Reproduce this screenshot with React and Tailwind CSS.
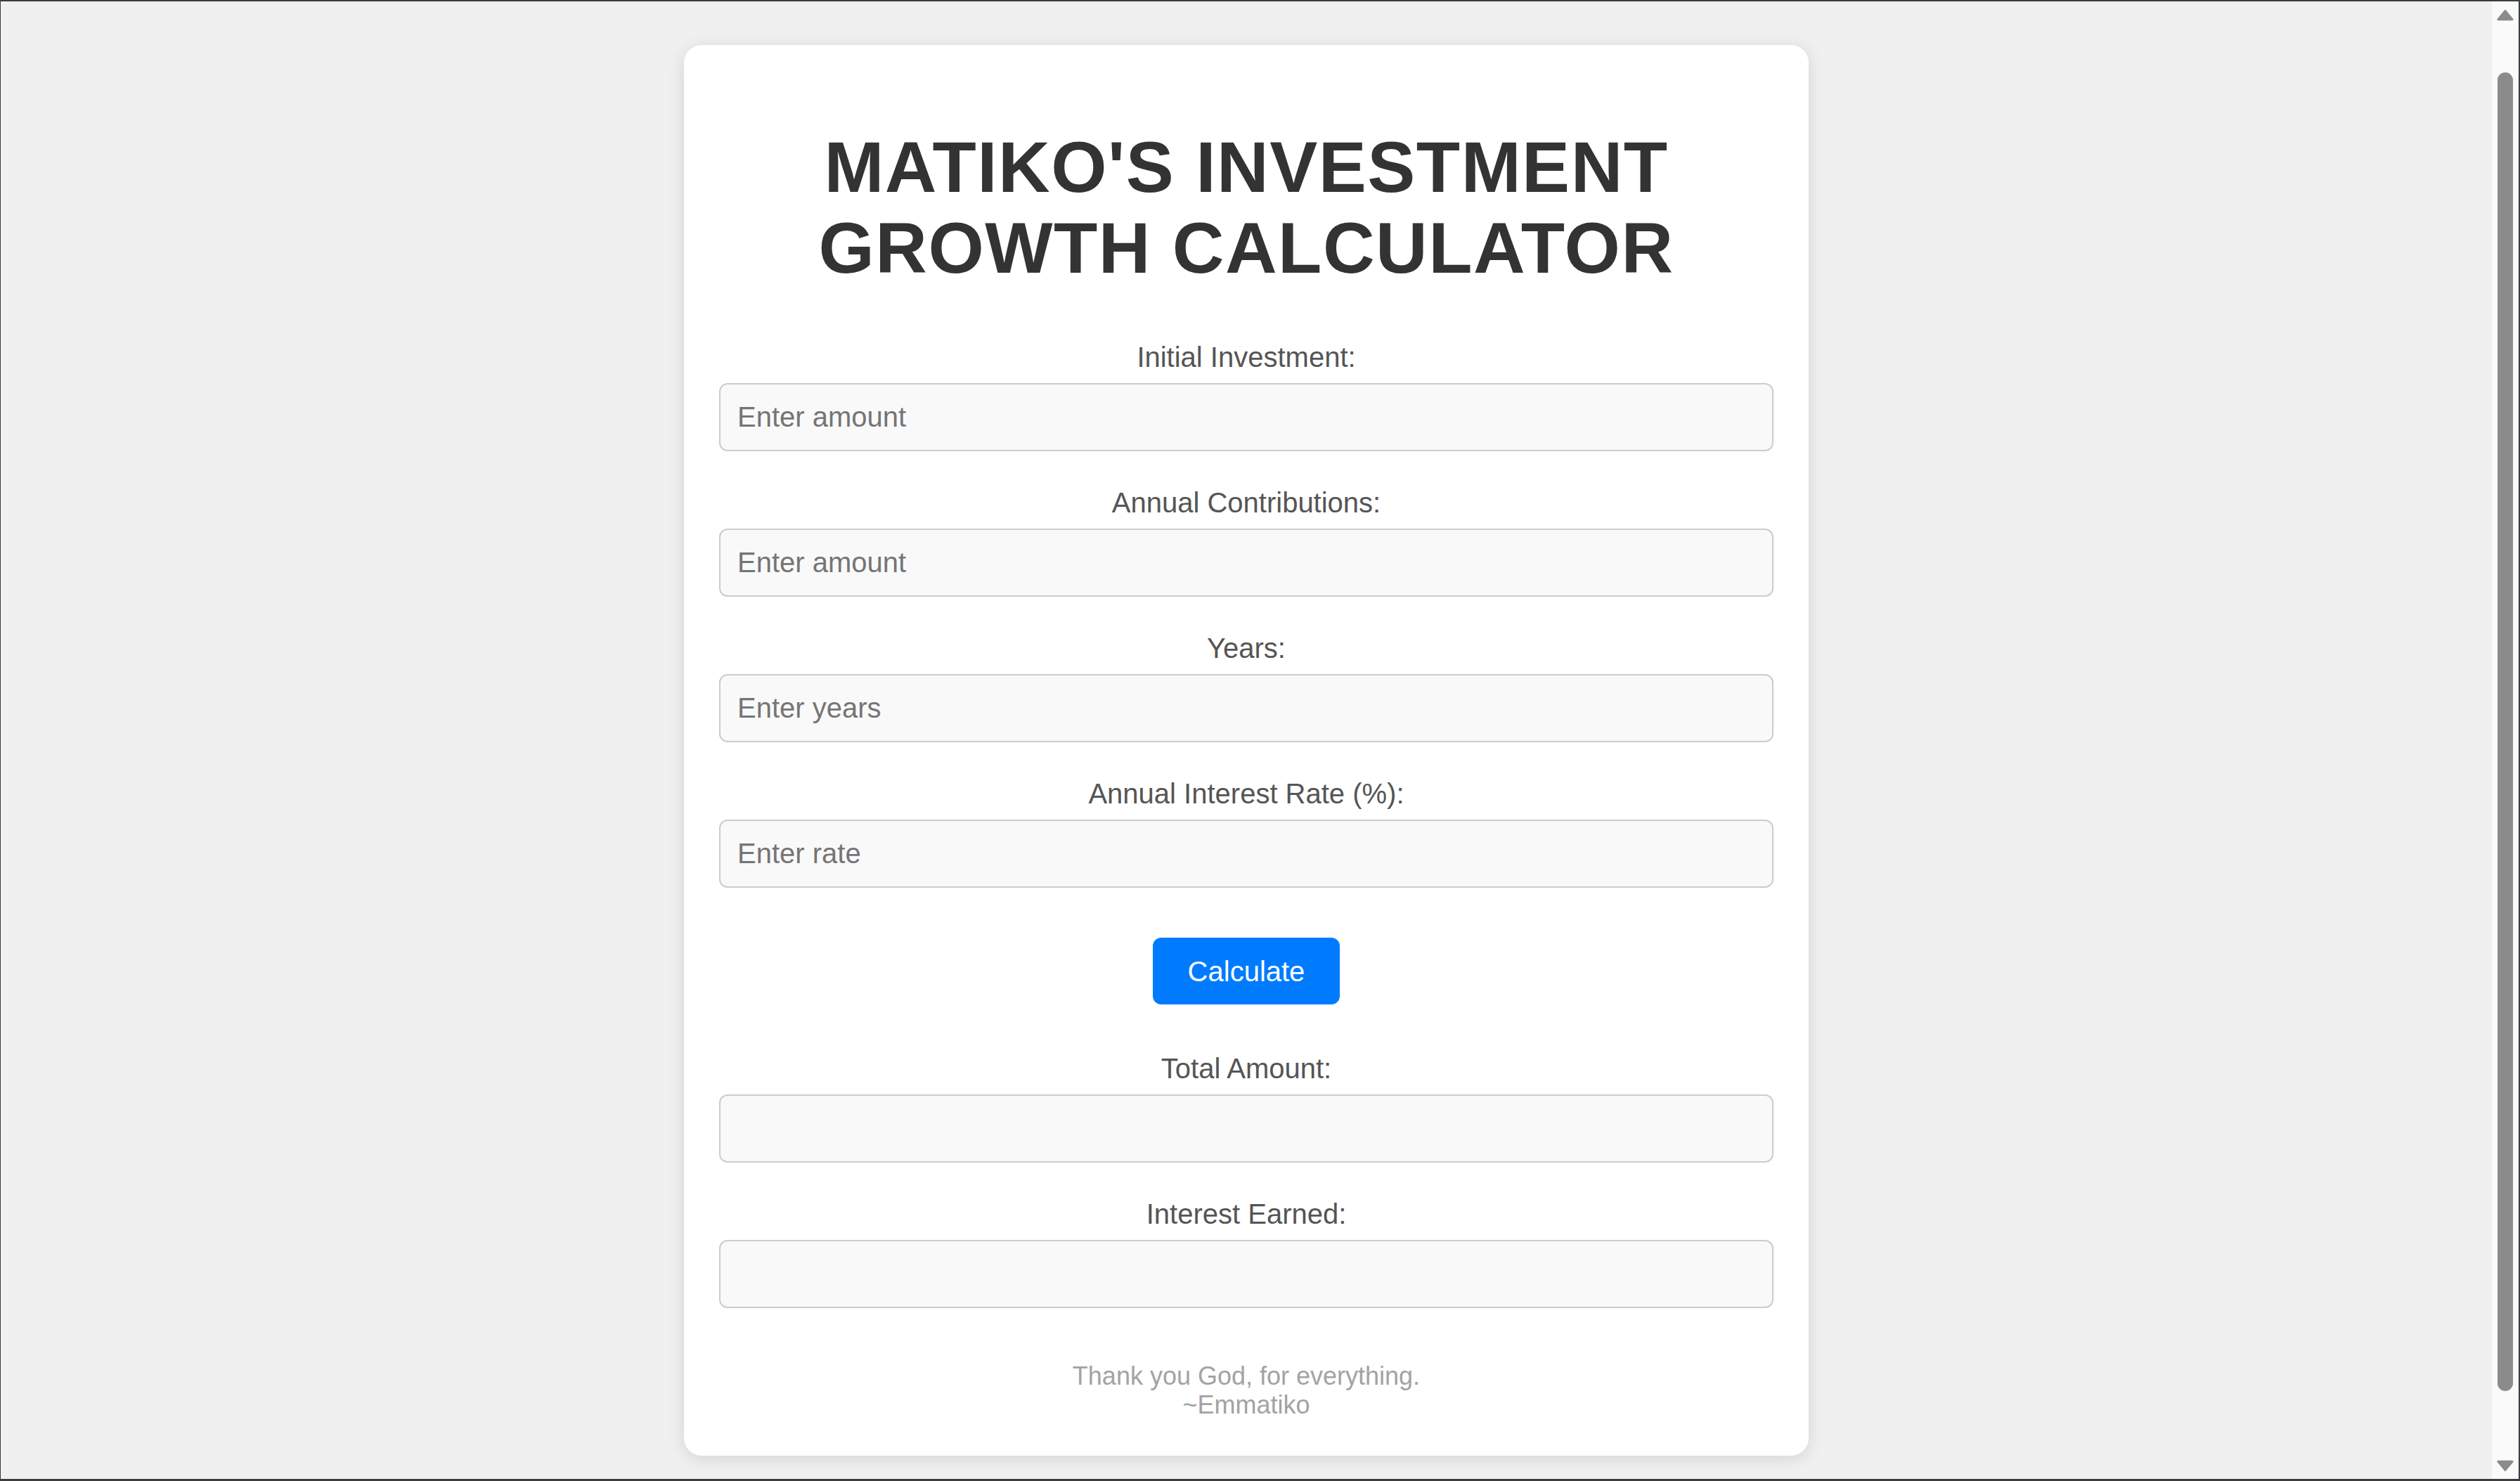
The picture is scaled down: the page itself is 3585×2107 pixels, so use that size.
import React from "react";

const font = { fontFamily: '"Liberation Sans", Arial, sans-serif' };

function Field({ label, placeholder, last }) {
  return (
    <div className={last ? "" : "mb-[50px]"}>
      <label className="block text-center text-[40px] leading-[46px] text-[#555] mb-[14px]">{label}</label>
      <input
        type="text"
        placeholder={placeholder}
        className="block w-full h-[97px] box-border border-[2.5px] border-[#ccc] rounded-[12px] bg-[#f9f9f9] px-[24px] text-[40px] text-[#333] placeholder:text-[#757575] outline-none"
        style={font}
      />
    </div>
  );
}

function Arrow({ down }) {
  return (
    <svg width="24" height="17" viewBox="0 0 24 17" className={down ? "rotate-180" : ""}>
      <path d="M12 1.5 L22.5 14 Q23.5 15.5 21.5 15.5 L2.5 15.5 Q0.5 15.5 1.5 14 Z" fill="#8b8b8b" stroke="#8b8b8b" strokeWidth="1.5" strokeLinejoin="round" />
    </svg>
  );
}

export default function App() {
  return (
    <div className="w-[3585px] h-[2107px] bg-[#3a3d43] pt-[2px] pl-[1px] pr-[2px] pb-[3px] box-border overflow-hidden" style={font}>
      <div className="flex h-full">
        <div className="flex-1 h-full bg-[#f0f0f0] overflow-hidden">
          <div className="mx-auto mt-[62px] w-[1600px] bg-white rounded-[25px] shadow-[0_4px_25px_rgba(0,0,0,0.12)] px-[50px] pt-[50px] pb-[52px] box-border">
            <h1 className="mt-[67px] mb-[74px] text-center text-[102px] leading-[115px] font-bold tracking-[1.5px] text-[#333] uppercase">
              Matiko's Investment Growth Calculator
            </h1>
            <Field label="Initial Investment:" placeholder="Enter amount" />
            <Field label="Annual Contributions:" placeholder="Enter amount" />
            <Field label="Years:" placeholder="Enter years" />
            <Field label="Annual Interest Rate (%):" placeholder="Enter rate" last />
            <div className="flex justify-center mt-[71px]">
              <button className="h-[95px] px-[50px] bg-[#007bff] text-white text-[40px] rounded-[12px]" style={font}>
                Calculate
              </button>
            </div>
            <div className="mt-[68px]">
              <Field label="Total Amount:" placeholder="" />
              <Field label="Interest Earned:" placeholder="" last />
            </div>
            <div className="mt-[76px] text-center text-[36px] leading-[41px] text-[#a3a3a3]">
              <p>Thank you God, for everything.</p>
              <p>~Emmatiko</p>
            </div>
          </div>
        </div>
        <div className="w-[38px] h-full bg-[#fafafa] flex flex-col items-center">
          <div className="mt-[11px]"><Arrow /></div>
          <div className="mt-[73px] w-[22px] h-[1876px] rounded-full bg-[#8b8b8b]" />
          <div className="mt-[98px]"><Arrow down /></div>
        </div>
      </div>
    </div>
  );
}
